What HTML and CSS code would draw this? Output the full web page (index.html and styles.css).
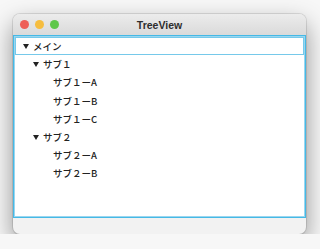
FILE: index.html
```html
<!DOCTYPE html>
<html lang="ja">
<head>
    <meta charset="UTF-8">
    <title>TreeView</title>
    <link rel="stylesheet" href="styles.css">
</head>
<body>

    <!-- ウィンドウ -->
    <div class="window">
        <div class="titlebar">
            <div class="lights">
                <span class="light red"></span>
                <span class="light yellow"></span>
                <span class="light green"></span>
            </div>
            <div class="title">TreeView</div>
        </div>

        <!-- ツリー -->
        <div class="tree">
            <div class="row focused lv0"><span class="arrow"></span><span class="label">メイン</span></div>
            <div class="row lv1"><span class="arrow"></span><span class="label">サブ１</span></div>
            <div class="row lv2"><span class="leaf"></span><span class="label">サブ１ーA</span></div>
            <div class="row lv2"><span class="leaf"></span><span class="label">サブ１ーB</span></div>
            <div class="row lv2"><span class="leaf"></span><span class="label">サブ１ーC</span></div>
            <div class="row lv1"><span class="arrow"></span><span class="label">サブ２</span></div>
            <div class="row lv2"><span class="leaf"></span><span class="label">サブ２ーA</span></div>
            <div class="row lv2"><span class="leaf"></span><span class="label">サブ２ーB</span></div>
        </div>

        <div class="bottom"></div>
    </div>

</body>
</html>
```

FILE: styles.css
```css
body {
    margin: 0;
    padding: 14px 14px 0 13px;
    background: #f7f7f7;
    font-family: "Noto Sans CJK JP", "Noto Sans", sans-serif;
}

.window {
    width: 293px;
    height: 220px;
    border-radius: 7px;
    background: #f2f2f2;
    box-shadow: 0 10px 24px rgba(0, 0, 0, 0.42), 0 0 0 1px rgba(0, 0, 0, 0.1);
    display: flex;
    flex-direction: column;
    overflow: hidden;
}

.titlebar {
    height: 21px;
    flex: none;
    display: flex;
    align-items: center;
    position: relative;
    background: linear-gradient(#ececec, #dadada);
}

.lights {
    display: flex;
    gap: 6px;
    padding-left: 7px;
}

.light {
    width: 9px;
    height: 9px;
    border-radius: 50%;
}

.red { background: #ee5f57; }
.yellow { background: #f6bd3f; }
.green { background: #5fc74a; }

.title {
    position: absolute;
    left: 0;
    right: 0;
    text-align: center;
    font-family: "Liberation Sans", sans-serif;
    font-weight: bold;
    font-size: 10.5px;
    color: #2e2e2e;
}

.tree {
    height: 183px;
    flex: none;
    box-sizing: border-box;
    background: #fff;
    border: 1px solid #45b9e6;
    box-shadow: inset 0 0 0 1px #9ad6ef;
    padding: 1px 1px 0 1px;
}

.row {
    height: 18.2px;
    box-sizing: border-box;
    display: flex;
    align-items: center;
    font-size: 9.5px;
    font-weight: 500;
    color: #222;
}

.focused {
    border: 1px solid #76c9ea;
}

.lv0 { padding-left: 8px; }
.lv1 { padding-left: 18px; }
.lv2 { padding-left: 28px; }

.focused.lv0 { padding-left: 7px; }

.arrow,
.leaf {
    width: 10px;
    flex: none;
    display: flex;
    align-items: center;
}

.arrow::before {
    content: "";
    border-left: 3px solid transparent;
    border-right: 3px solid transparent;
    border-top: 5px solid #222;
}

.bottom {
    flex: 1;
}
```
